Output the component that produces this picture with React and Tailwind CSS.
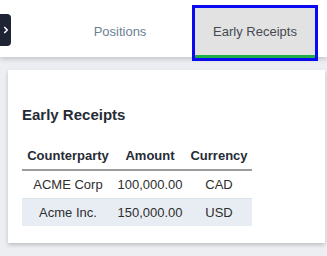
import { ChevronRight } from 'lucide-react';

const rows = [
    { name: 'ACME Corp', amount: '100,000.00', currency: 'CAD' },
    { name: 'Acme Inc.', amount: '150,000.00', currency: 'USD' },
];

const App = () => {
    return (
        <div className="w-[327px] h-[256px] overflow-hidden bg-[#eceef1] font-['Liberation_Sans',Arial,sans-serif]">
            <div className="relative z-10 h-[57px] bg-white shadow-[0_2px_5px_rgba(0,0,0,0.18)] flex items-start">
                <div className="mt-[14px] w-[11px] h-[32px] bg-[#1f2435] rounded-r-[4px] flex items-center justify-center">
                    <ChevronRight size={10} strokeWidth={4} className="text-white" />
                </div>
                <div className="w-[181px] h-[57px] flex items-center justify-center pl-[37px] pt-[6px]">
                    <span className="text-[13px] text-[#6e7f92]">Positions</span>
                </div>
                <div className="mt-[5px] w-[126px] h-[56px] border-[3px] border-[#0a0af0] bg-[#e2e2e2] flex flex-col">
                    <div className="flex-1 flex items-center justify-center pt-[1px]">
                        <span className="text-[13px] text-[#454a52]">Early Receipts</span>
                    </div>
                    <div className="h-[3px] bg-[#1fad4a]" />
                </div>
            </div>

            <div className="pt-[13px] pl-[8px] pr-[2px]">
                <div className="h-[173px] bg-white shadow-[0_2px_4px_rgba(0,0,0,0.2)] pt-[35px] pl-[14px]">
                    <h2 className="text-[15px] leading-[20px] font-bold text-[#262b36]">Early Receipts</h2>
                    <table className="mt-[17px] w-[230px] border-collapse text-[13px] text-center table-fixed">
                        <thead>
                            <tr className="border-b-2 border-[#9c9c9c]">
                                <th className="w-[92px] h-[28px] font-bold text-[#262b36]">Counterparty</th>
                                <th className="w-[72px] font-bold text-[#262b36]">Amount</th>
                                <th className="w-[66px] font-bold text-[#262b36]">Currency</th>
                            </tr>
                        </thead>
                        <tbody>
                            {rows.map((row, i) => (
                                <tr key={row.name} className={i % 2 ? 'bg-[#e8edf3]' : 'border-b border-[#dde3ea]'}>
                                    <td className="h-[28px] text-[#2e2e2e]">{row.name}</td>
                                    <td className="text-[#2e2e2e]">{row.amount}</td>
                                    <td className="text-[#2e2e2e]">{row.currency}</td>
                                </tr>
                            ))}
                        </tbody>
                    </table>
                </div>
            </div>
        </div>
    );
};

export default App;
